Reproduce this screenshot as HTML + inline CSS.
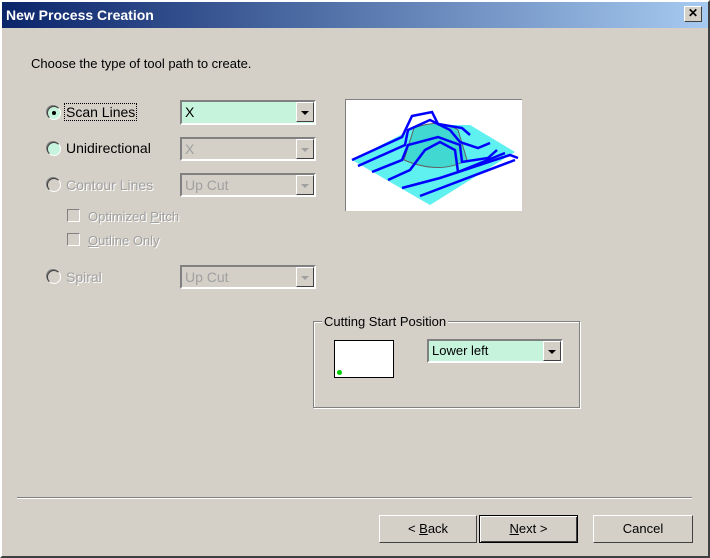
<!DOCTYPE html>
<html><head><style>
body{margin:0;width:710px;height:558px;background:#d4d0c8;font-family:"Liberation Sans",Arial,sans-serif;font-size:13px;position:relative;overflow:hidden}
.a{position:absolute}
.win{left:0;top:0;width:706px;height:554px;border:2px solid;border-color:#fff #404040 #404040 #fff}
.title{left:2px;top:2px;width:706px;height:26px;background:linear-gradient(90deg,#0a246a,#a6caf0);color:#fff;font-weight:bold;font-size:14px;line-height:26px;text-indent:4px}
.close{left:684px;top:6px;width:16px;height:14px;background:#d4d0c8;border:1px solid;border-color:#fff #404040 #404040 #fff;font-size:12px;line-height:13px;text-align:center;color:#000;font-weight:bold}
.combo{height:24px;border:2px solid;border-color:#808080 #fff #fff #808080;box-sizing:border-box;background:#c6f3dc;line-height:20px;padding-left:3px;font-size:14px}
.combo.d{background:#d4d0c8;color:#a0a0a0}
.btnd{position:absolute;right:0;top:0;width:18px;height:20px;background:#d4d0c8;border:1px solid;border-color:#fff #404040 #404040 #fff;box-sizing:border-box}
.btnd:after{content:"";position:absolute;left:4px;top:8px;border:4px solid transparent;border-top:4px solid #000;border-bottom:0}
.d .btnd:after{border-top-color:#a0a0a0}
.radio{width:12px;height:12px;border-radius:50%;border:1px solid;border-color:#404040 #fff #fff #404040;background:#c6f3dc;box-shadow:-1px -1px 0 #808080}
.radio.d{background:#d4d0c8}
.lbl{color:#000;font-size:14px}.dl{color:#a0a0a0;text-shadow:1px 1px #fff;font-size:13px}
.cb{width:13px;height:13px;border:1px solid;border-color:#808080 #fff #fff #808080;background:#d4d0c8;box-sizing:border-box}
.btn{height:28px;border:1px solid;border-color:#fff #404040 #404040 #fff;box-sizing:border-box;text-align:center;line-height:26px;font-size:13px}
</style></head><body>
<div class="a win"></div>
<div class="a title">New Process Creation</div>
<div class="a close">✕</div>
<div class="a" style="left:31px;top:56px">Choose the type of tool path to create.</div>

<div class="a radio" style="left:47px;top:106px"><div style="width:4px;height:4px;background:#000;border-radius:50%;margin:4px;"></div></div>
<div class="a lbl" style="left:64px;top:103px;border:1px dotted #000;padding:0 1px;line-height:16px">Scan Lines</div>
<div class="a combo" style="left:180px;top:100px;width:136px;height:25px">X<div class="btnd"></div></div>

<div class="a radio" style="left:47px;top:142px"></div>
<div class="a lbl" style="left:66px;top:140px">Unidirectional</div>
<div class="a combo d" style="left:180px;top:137px;width:136px">X<div class="btnd"></div></div>

<div class="a radio d" style="left:47px;top:178px"></div>
<div class="a dl" style="left:66px;top:177px;font-size:14px">Contour Lines</div>
<div class="a combo d" style="left:180px;top:173px;width:136px">Up Cut<div class="btnd"></div></div>

<div class="a cb" style="left:67px;top:209px"></div>
<div class="a dl" style="left:88px;top:209px">Optimized <u>P</u>itch</div>
<div class="a cb" style="left:67px;top:233px"></div>
<div class="a dl" style="left:88px;top:233px"><u>O</u>utline Only</div>

<div class="a radio d" style="left:47px;top:270px"></div>
<div class="a dl" style="left:66px;top:269px;font-size:14px">Spiral</div>
<div class="a combo d" style="left:180px;top:265px;width:136px">Up Cut<div class="btnd"></div></div>

<div class="a" style="left:345px;top:99px;width:177px;height:112px;background:#fff;border-top:1px solid #808080;border-left:1px solid #808080;box-sizing:border-box;overflow:hidden">
<svg width="177" height="112" viewBox="345 99 177 112" style="position:absolute;left:-1px;top:-1px">
<polygon points="352,160 420,125 470,125 515,152 430,205" fill="#5ff0f0"/>
<path d="M414,128 Q440,118 458,130 L467,160 Q440,175 404,160 Z" fill="#40d8d0" stroke="#606060"/>
<g fill="none" stroke="#0000ff" stroke-width="2.5">
<path d="M352,160 L402,137 L412,116 L432,112 L438,124 L462,128 L470,135"/>
<path d="M358,166 L405,145 L408,130 L430,120 L450,130 L460,142 L478,148 L490,143"/>
<path d="M372,172 L402,160 L408,145 L438,137 L460,145 L462,162 L488,158 L497,150"/>
<path d="M388,180 L410,170 L425,150 L440,142 L455,150 L458,172 L505,153"/>
<path d="M402,188 L440,178 L440,178 L510,155 L518,158"/>
<path d="M420,196 L515,160"/>
</g></svg></div>

<div class="a" style="left:313px;top:321px;width:267px;height:87px;border:1px solid #808080;box-shadow:1px 1px #fff, inset 1px 1px #fff;box-sizing:border-box"></div>
<div class="a" style="left:322px;top:314px;background:#d4d0c8;padding:0 2px">Cutting Start Position</div>
<div class="a" style="left:334px;top:340px;width:60px;height:38px;background:#fff;border:1px solid #000;box-sizing:border-box"><div style="position:absolute;left:2px;bottom:2px;width:5px;height:5px;border-radius:50%;background:#0c0"></div></div>
<div class="a combo" style="left:427px;top:339px;width:136px;height:24px;line-height:20px;font-size:13px">Lower left<div class="btnd"></div></div>

<div class="a" style="left:17px;top:497px;width:675px;height:1px;background:#808080;border-bottom:1px solid #fff"></div>
<div class="a btn" style="left:379px;top:515px;width:98px">&lt; <u>B</u>ack</div>
<div class="a btn" style="left:479px;top:515px;width:99px;border:1px solid #000;box-shadow:inset 1px 1px #fff,inset -1px -1px #404040"><u>N</u>ext &gt;</div>
<div class="a btn" style="left:593px;top:515px;width:100px">Cancel</div>
</body></html>
